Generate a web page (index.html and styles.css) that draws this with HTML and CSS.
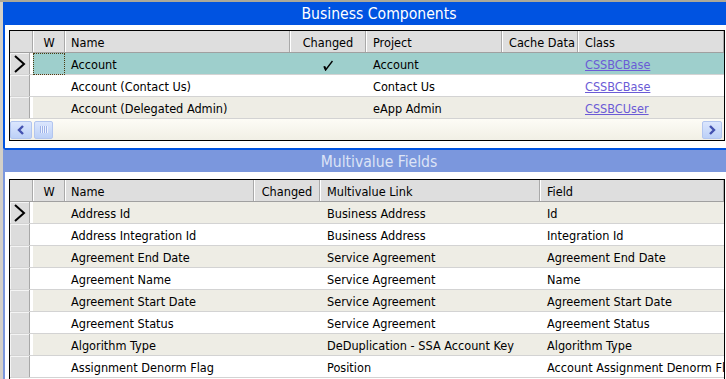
FILE: index.html
```html
<!DOCTYPE html>
<html lang="en">
<head>
    <meta charset="UTF-8">
    <title>Business Components</title>
    <link rel="stylesheet" href="styles.css">
</head>
<body>
    <div class="topline"></div>
    <div class="window">
        <div class="pane">
            <div class="title">Business Components</div>
            <div class="pane-body">
                <div class="grid">
                    <table>
                        <colgroup>
                            <col style="width: 23px"><col style="width: 32px"><col style="width: 225px"><col style="width: 76px"><col style="width: 136px"><col style="width: 76px"><col style="width: 146px">
                        </colgroup>
                        <thead>
                            <tr><th class="rh"></th><th class="c">W</th><th class="first">Name</th><th class="c">Changed</th><th>Project</th><th>Cache Data</th><th>Class</th></tr>
                        </thead>
                        <tbody>
                            <tr class="sel">
                                <td class="rh"><div class="rhbox"><svg width="20" height="21" viewBox="0 0 20 21"><polyline points="5,3 14,11 5,19" fill="none" stroke="#000" stroke-width="2"/></svg></div></td>
                                <td class="focus"></td>
                                <td class="first">Account</td>
                                <td class="c"><svg class="check" width="10" height="11" viewBox="0 0 10 11"><path d="M1 6.5 L2.6 10 L9.5 1" fill="none" stroke="#000" stroke-width="1.4"/><path d="M0.6 6 L3 6.8 L2.4 10.4 Z" fill="#000"/></svg></td>
                                <td>Account</td>
                                <td></td>
                                <td><a href="#">CSSBCBase</a></td>
                            </tr>
                            <tr>
                                <td class="rh"><div class="rhbox"></div></td>
                                <td></td>
                                <td class="first">Account (Contact Us)</td>
                                <td></td>
                                <td>Contact Us</td>
                                <td></td>
                                <td><a href="#">CSSBCBase</a></td>
                            </tr>
                            <tr class="alt">
                                <td class="rh"><div class="rhbox"></div></td>
                                <td></td>
                                <td class="first">Account (Delegated Admin)</td>
                                <td></td>
                                <td>eApp Admin</td>
                                <td></td>
                                <td><a href="#">CSSBCUser</a></td>
                            </tr>
                        </tbody>
                    </table>
                    <div class="hscroll">
                        <div class="sb-left">
                            <div class="sb-btn"><svg width="20" height="16" viewBox="0 0 20 16"><polyline points="12,4 8,8 12,12" fill="none" stroke="#4452b0" stroke-width="2.4"/></svg></div>
                            <div class="sb-thumb"><span></span><span></span><span></span><span></span></div>
                        </div>
                        <div class="sb-btn right"><svg width="18" height="16" viewBox="0 0 18 16"><polyline points="7,4 11,8 7,12" fill="none" stroke="#4452b0" stroke-width="2.4"/></svg></div>
                    </div>
                </div>
            </div>
        </div>

        <div class="pane inactive">
            <div class="title">Multivalue Fields</div>
            <div class="pane-body">
                <div class="grid">
                    <table>
                        <colgroup>
                            <col style="width: 23px"><col style="width: 32px"><col style="width: 189px"><col style="width: 66px"><col style="width: 220px"><col style="width: 184px">
                        </colgroup>
                        <thead>
                            <tr><th class="rh"></th><th class="c">W</th><th class="first">Name</th><th class="c">Changed</th><th>Multivalue Link</th><th>Field</th></tr>
                        </thead>
                        <tbody>
                            <tr class="alt">
                                <td class="rh"><div class="rhbox"><svg width="20" height="21" viewBox="0 0 20 21"><polyline points="5,3 14,11 5,19" fill="none" stroke="#000" stroke-width="2"/></svg></div></td>
                                <td></td><td class="first">Address Id</td><td></td><td>Business Address</td><td>Id</td>
                            </tr>
                            <tr>
                                <td class="rh"><div class="rhbox"></div></td>
                                <td></td><td class="first">Address Integration Id</td><td></td><td>Business Address</td><td>Integration Id</td>
                            </tr>
                            <tr class="alt">
                                <td class="rh"><div class="rhbox"></div></td>
                                <td></td><td class="first">Agreement End Date</td><td></td><td>Service Agreement</td><td>Agreement End Date</td>
                            </tr>
                            <tr>
                                <td class="rh"><div class="rhbox"></div></td>
                                <td></td><td class="first">Agreement Name</td><td></td><td>Service Agreement</td><td>Name</td>
                            </tr>
                            <tr class="alt">
                                <td class="rh"><div class="rhbox"></div></td>
                                <td></td><td class="first">Agreement Start Date</td><td></td><td>Service Agreement</td><td>Agreement Start Date</td>
                            </tr>
                            <tr>
                                <td class="rh"><div class="rhbox"></div></td>
                                <td></td><td class="first">Agreement Status</td><td></td><td>Service Agreement</td><td>Agreement Status</td>
                            </tr>
                            <tr class="alt">
                                <td class="rh"><div class="rhbox"></div></td>
                                <td></td><td class="first">Algorithm Type</td><td></td><td>DeDuplication - SSA Account Key</td><td>Algorithm Type</td>
                            </tr>
                            <tr>
                                <td class="rh"><div class="rhbox"></div></td>
                                <td></td><td class="first">Assignment Denorm Flag</td><td></td><td>Position</td><td>Account Assignment Denorm Flag</td>
                            </tr>
                        </tbody>
                    </table>
                </div>
            </div>
        </div>
    </div>
</body>
</html>
```

FILE: styles.css
```css
body {
    margin: 0;
    width: 726px;
    height: 379px;
    overflow: hidden;
    background: #d4d0c8;
    font-family: "DejaVu Sans Condensed", "DejaVu Sans", sans-serif;
    font-size: 12.6px;
    color: #000;
}
.topline {
    height: 2px;
    background: #aca899;
}
.window {
    margin-left: 3px;
}
.pane {
    background: #fff;
    border-left: 2px solid #0053e1;
}
.pane.inactive {
    border-left-color: #7b97dd;
    border-top: 2px solid #0053e1;
}
.title {
    height: 22px;
    line-height: 22px;
    padding: 1px 0 0 27px;
    text-align: center;
    font-size: 15.6px;
    background: #0053e1;
    color: #fff;
}
.inactive .title {
    height: 19px;
    line-height: 19px;
    padding-top: 3px;
    background: #7b97dd;
    color: #dde4f6;
}
.pane-body {
    padding: 5px 1px 7px 4px;
}
.inactive .pane-body {
    padding: 7px 1px 0 4px;
}
.grid {
    border: 1px solid #000;
    background: #fff;
    overflow: hidden;
}
.inactive .grid {
    height: 210px;
    border-bottom: none;
}
table {
    width: 714px;
    border-collapse: separate;
    border-spacing: 0;
    table-layout: fixed;
}
tr {
    height: 22px;
}
th, td {
    padding: 2px 4px 0 7px;
    border-bottom: 1px solid #d3d3d3;
    white-space: nowrap;
    overflow: hidden;
    text-align: left;
    font-weight: normal;
}
.first {
    padding-left: 6px;
}
th {
    background: #dedede;
    border-bottom: 1px solid #a0a0a0;
    box-shadow: inset 1px 0 #fff, inset -1px 0 #a9a9a9;
}
th.rh {
    box-shadow: inset -1px 0 #a9a9a9;
}
.c {
    text-align: center;
    padding-left: 4px;
}
td.rh {
    padding: 0;
    background: #fff;
    vertical-align: top;
}
.rhbox {
    width: 19px;
    height: 21px;
    background: #dcdcdc;
    border-right: 1px solid #a8a8a8;
    box-shadow: inset 1px 1px #f4f4f4;
}
.rhbox svg {
    display: block;
}
tr.sel td:not(.rh) {
    background: #9ecfcc;
}
tr.alt td:not(.rh) {
    background: #eeede5;
}
td.focus {
    outline: 1px dotted #4a3a10;
    outline-offset: -1px;
}
.check {
    vertical-align: middle;
}
a {
    color: #6b5bd6;
    text-decoration: underline;
}
.hscroll {
    height: 21px;
    display: flex;
    align-items: center;
    justify-content: space-between;
    padding-right: 2px;
    background: linear-gradient(#fdfcf6, #f1efe5);
}
.sb-left {
    display: flex;
    gap: 2px;
}
.sb-btn, .sb-thumb {
    height: 16px;
    border: 1px solid #b2c5ef;
    border-radius: 2px;
    background: linear-gradient(#dbe6fd, #bcd0f7);
}
.sb-btn {
    width: 20px;
}
.sb-btn.right {
    width: 18px;
}
.sb-btn svg {
    display: block;
}
.sb-thumb {
    width: 17px;
    display: flex;
    justify-content: center;
    align-items: center;
    gap: 1px;
}
.sb-thumb span {
    width: 1px;
    height: 7px;
    background: #9fb3e8;
    box-shadow: 1px 0 #eef3fe;
}
```
